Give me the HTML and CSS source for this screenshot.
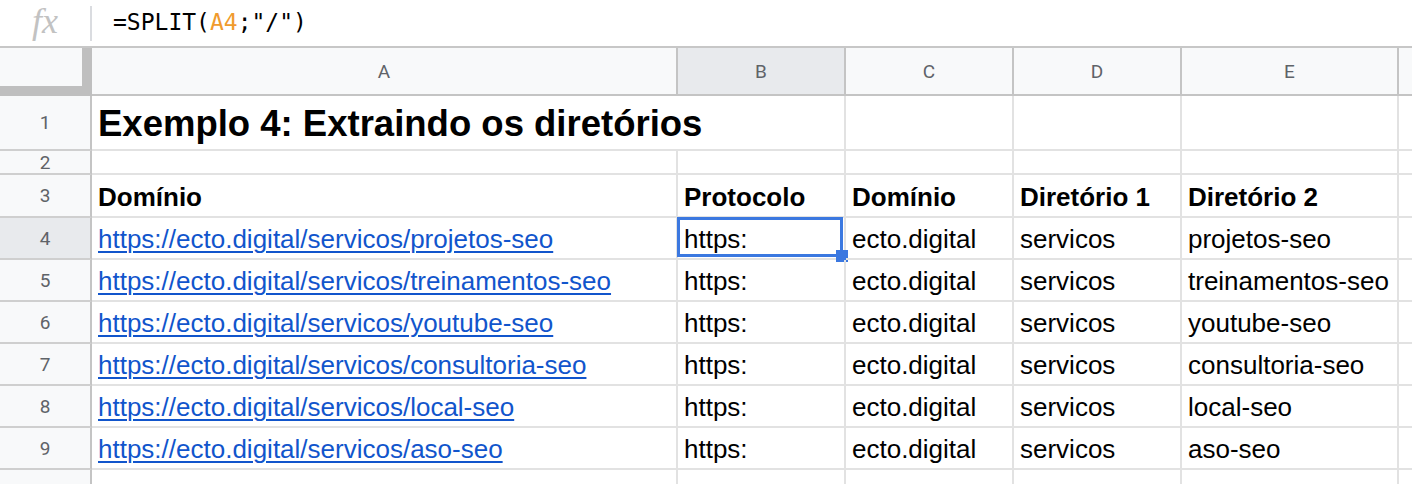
FILE: index.html
```html
<!DOCTYPE html>
<html lang="pt">
<head>
    <meta charset="UTF-8">
    <title>Exemplo 4: Extraindo os diretórios</title>
    <link rel="stylesheet" href="styles.css">
</head>
<body>
    <div class="formula-bar">
        <div class="fx">fx</div>
        <div class="divider"></div>
        <div class="formula">=SPLIT(<span class="ref">A4</span>;"/")</div>
    </div>

    <div class="sheet">
        <!-- column headers -->
        <div class="corner"><div class="corner-inner"></div></div>
        <div class="col-head">A</div>
        <div class="col-head active">B</div>
        <div class="col-head">C</div>
        <div class="col-head">D</div>
        <div class="col-head">E</div>
        <div class="col-head last"></div>

        <!-- row 1 -->
        <div class="row-head">1</div>
        <div class="cell title">Exemplo 4: Extraindo os diretórios</div>
        <div class="cell"></div>
        <div class="cell"></div>
        <div class="cell"></div>
        <div class="cell last"></div>

        <!-- row 2 -->
        <div class="row-head">2</div>
        <div class="cell"></div>
        <div class="cell"></div>
        <div class="cell"></div>
        <div class="cell"></div>
        <div class="cell"></div>
        <div class="cell last"></div>

        <!-- row 3 -->
        <div class="row-head">3</div>
        <div class="cell bold">Domínio</div>
        <div class="cell bold">Protocolo</div>
        <div class="cell bold">Domínio</div>
        <div class="cell bold">Diretório 1</div>
        <div class="cell bold">Diretório 2</div>
        <div class="cell last"></div>

        <!-- row 4 -->
        <div class="row-head active">4</div>
        <div class="cell"><a href="#">https://ecto.digital/servicos/projetos-seo</a></div>
        <div class="cell selected">https:<span class="sel-box"></span><span class="sel-handle"></span></div>
        <div class="cell">ecto.digital</div>
        <div class="cell">servicos</div>
        <div class="cell">projetos-seo</div>
        <div class="cell last"></div>

        <!-- row 5 -->
        <div class="row-head">5</div>
        <div class="cell"><a href="#">https://ecto.digital/servicos/treinamentos-seo</a></div>
        <div class="cell">https:</div>
        <div class="cell">ecto.digital</div>
        <div class="cell">servicos</div>
        <div class="cell">treinamentos-seo</div>
        <div class="cell last"></div>

        <!-- row 6 -->
        <div class="row-head">6</div>
        <div class="cell"><a href="#">https://ecto.digital/servicos/youtube-seo</a></div>
        <div class="cell">https:</div>
        <div class="cell">ecto.digital</div>
        <div class="cell">servicos</div>
        <div class="cell">youtube-seo</div>
        <div class="cell last"></div>

        <!-- row 7 -->
        <div class="row-head">7</div>
        <div class="cell"><a href="#">https://ecto.digital/servicos/consultoria-seo</a></div>
        <div class="cell">https:</div>
        <div class="cell">ecto.digital</div>
        <div class="cell">servicos</div>
        <div class="cell">consultoria-seo</div>
        <div class="cell last"></div>

        <!-- row 8 -->
        <div class="row-head">8</div>
        <div class="cell"><a href="#">https://ecto.digital/servicos/local-seo</a></div>
        <div class="cell">https:</div>
        <div class="cell">ecto.digital</div>
        <div class="cell">servicos</div>
        <div class="cell">local-seo</div>
        <div class="cell last"></div>

        <!-- row 9 -->
        <div class="row-head">9</div>
        <div class="cell"><a href="#">https://ecto.digital/servicos/aso-seo</a></div>
        <div class="cell">https:</div>
        <div class="cell">ecto.digital</div>
        <div class="cell">servicos</div>
        <div class="cell">aso-seo</div>
        <div class="cell last"></div>

        <!-- row 10 -->
        <div class="row-head">10</div>
        <div class="cell"></div>
        <div class="cell"></div>
        <div class="cell"></div>
        <div class="cell"></div>
        <div class="cell"></div>
        <div class="cell last"></div>
    </div>
</body>
</html>
```

FILE: styles.css
```css
html, body {
    margin: 0;
    height: 100%;
    overflow: hidden;
    background: #fff;
}
body {
    font-family: "Liberation Sans", Arial, sans-serif;
    color: #000;
}

.formula-bar {
    display: flex;
    align-items: center;
    height: 46px;
    border-bottom: 2px solid #c7c7c7;
}
.fx {
    width: 90px;
    text-align: center;
    font-family: "Liberation Serif", serif;
    font-style: italic;
    font-size: 36px;
    color: #c2c2c2;
    line-height: 46px;
    margin-top: -4px;
}
.divider {
    width: 2px;
    height: 35px;
    background: #dadce0;
}
.formula {
    padding-left: 21px;
    font-family: "DejaVu Sans Mono", monospace;
    font-size: 23px;
    margin-top: -2px;
}
.formula .ref { color: #f09b2d; }

.sheet {
    display: grid;
    grid-template-columns: 92px 586px 168px 168px 168px 217px 1fr;
    grid-template-rows: 48px 55px 24px 43px repeat(7, 42px);
}
.sheet > div {
    box-sizing: border-box;
}

.corner {
    background: #bfbfbf;
}
.corner-inner {
    width: 82px;
    height: 38px;
    background: #f8f9fa;
}
.col-head {
    display: flex;
    align-items: center;
    justify-content: center;
    background: #f8f9fa;
    border-right: 2px solid #c4c4c4;
    border-bottom: 2px solid #c4c4c4;
    font-family: Roboto, Arial, sans-serif;
    font-size: 19px;
    color: #5f6368;
}
.col-head.active { background: #e8eaed; }
.col-head.last { border-right: none; }

.row-head {
    display: flex;
    align-items: center;
    justify-content: center;
    background: #f8f9fa;
    border-right: 2px solid #c4c4c4;
    border-bottom: 2px solid #cfcfcf;
    font-family: Roboto, Arial, sans-serif;
    font-size: 19px;
    color: #5f6368;
}
.row-head.active { background: #e8eaed; }

.cell {
    position: relative;
    display: flex;
    align-items: flex-end;
    padding: 0 6px 6px;
    border-right: 2px solid #e2e2e2;
    border-bottom: 2px solid #e2e2e2;
    font-size: 26px;
    line-height: 26px;
    white-space: nowrap;
}
.cell.last { border-right: none; }
.cell.bold { font-weight: bold; }
.cell.title {
    grid-column: span 2;
    font-size: 36.5px;
    line-height: 36px;
    font-weight: bold;
    padding-bottom: 7px;
}
.cell a {
    color: #1155cc;
    text-decoration: underline;
    text-decoration-thickness: 2px;
    text-underline-offset: 3px;
}

.sel-box {
    position: absolute;
    top: -1px;
    left: -1px;
    right: 1px;
    bottom: 1px;
    border: 3px solid #3b78e0;
}
.sel-handle {
    position: absolute;
    right: -4px;
    bottom: -4px;
    width: 12px;
    height: 12px;
    background: #3b78e0;
}
```
